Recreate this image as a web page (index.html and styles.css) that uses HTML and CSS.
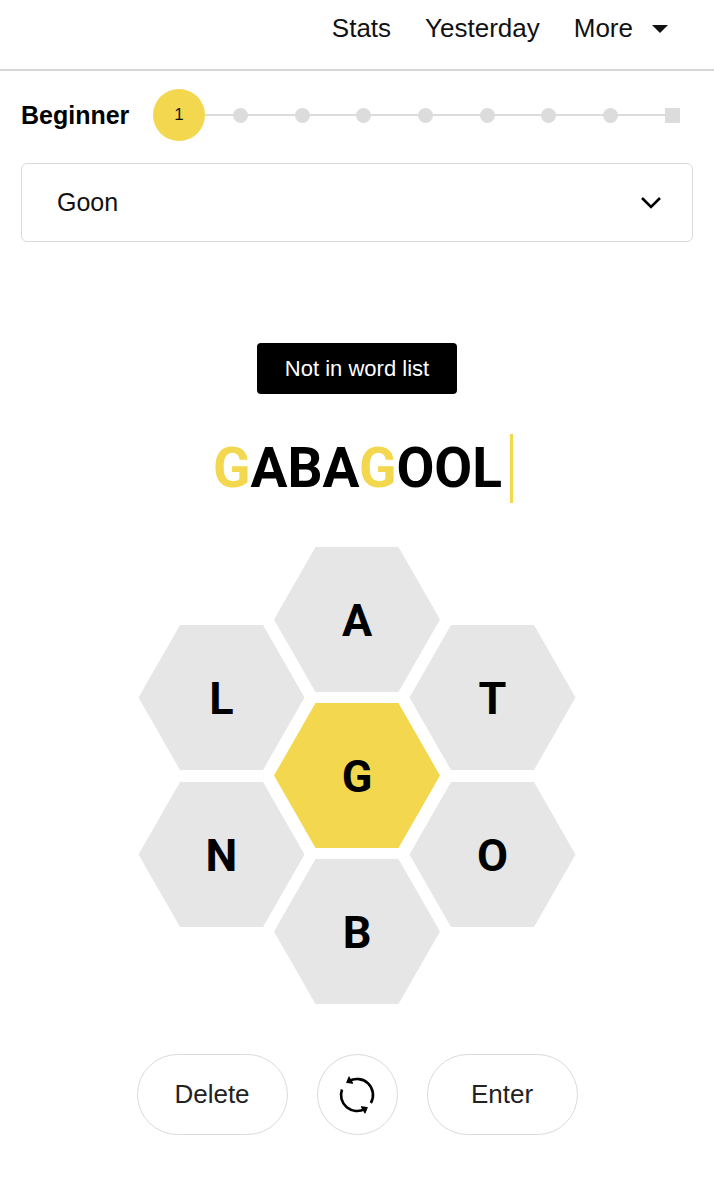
FILE: index.html
```html
<!DOCTYPE html>
<html lang="en">
<head>
<meta charset="utf-8">
<title>Spelling Bee</title>
<link rel="stylesheet" href="styles.css">
</head>
<body>
<header class="topnav">
  <a class="nav-link">Stats</a>
  <a class="nav-link">Yesterday</a>
  <a class="nav-link nav-more">More <span class="caret"></span></a>
</header>

<section class="rank">
  <span class="rank-label">Beginner</span>
  <div class="rank-track">
    <div class="step"><span class="step-current">1</span></div>
    <div class="step"><span class="step-dot"></span></div>
    <div class="step"><span class="step-dot"></span></div>
    <div class="step"><span class="step-dot"></span></div>
    <div class="step"><span class="step-dot"></span></div>
    <div class="step"><span class="step-dot"></span></div>
    <div class="step"><span class="step-dot"></span></div>
    <div class="step"><span class="step-dot"></span></div>
    <div class="step"><span class="step-last"></span></div>
  </div>
</section>

<div class="wordlist-toggle">
  <span class="wordlist-text">Goon</span>
  <svg class="chevron" width="22" height="14" viewBox="0 0 22 14"><polyline points="2,2 11,11 20,2" fill="none" stroke="#000" stroke-width="2.6"/></svg>
</div>

<main class="play">
  <div class="toast">Not in word list</div>

  <div class="input-row">
    <span class="input-word"><span class="center-letter">G</span>ABA<span class="center-letter">G</span>OOL</span>
    <span class="cursor"></span>
  </div>

  <svg class="hive" width="440" height="458" viewBox="0 0 440 458">
    <g class="cell">
      <polygon class="cell-outer" points="137,72.5 178.5,0 261.5,0 303,72.5 261.5,145 178.5,145"/>
      <text class="cell-letter" x="220" y="89">A</text>
    </g>
    <g class="cell">
      <polygon class="cell-outer" points="1.5,150.5 43,78 126,78 167.5,150.5 126,223 43,223"/>
      <text class="cell-letter" x="84.5" y="167">L</text>
    </g>
    <g class="cell">
      <polygon class="cell-outer" points="272.5,150.5 314,78 397,78 438.5,150.5 397,223 314,223"/>
      <text class="cell-letter" x="355.5" y="167">T</text>
    </g>
    <g class="cell">
      <polygon class="cell-center" points="137,228.5 178.5,156 261.5,156 303,228.5 261.5,301 178.5,301"/>
      <text class="cell-letter" x="220" y="245">G</text>
    </g>
    <g class="cell">
      <polygon class="cell-outer" points="1.5,307.5 43,235 126,235 167.5,307.5 126,380 43,380"/>
      <text class="cell-letter" x="84.5" y="324">N</text>
    </g>
    <g class="cell">
      <polygon class="cell-outer" points="272.5,307.5 314,235 397,235 438.5,307.5 397,380 314,380"/>
      <text class="cell-letter" x="355.5" y="324">O</text>
    </g>
    <g class="cell">
      <polygon class="cell-outer" points="137,384.5 178.5,312 261.5,312 303,384.5 261.5,457 178.5,457"/>
      <text class="cell-letter" x="220" y="401">B</text>
    </g>
  </svg>

  <div class="controls">
    <button class="pill">Delete</button>
    <button class="pill pill-round" aria-label="Shuffle">
      <svg width="40" height="40" viewBox="0 0 40 40" stroke="#000" stroke-width="2.6" stroke-linejoin="round">
        <path d="M12 6.14 A16 16 0 0 1 33.86 28" fill="none"/>
        <path d="M28 33.86 A16 16 0 0 1 4.97 14.53" fill="none"/>
        <polygon points="9.84,7.39 15.48,8.17 11.98,2.11" fill="#000" stroke-width="1.2"/>
        <polygon points="30.17,32.61 28.02,37.89 24.52,31.83" fill="#000" stroke-width="1.2"/>
      </svg>
    </button>
    <button class="pill">Enter</button>
  </div>
</main>
</body>
</html>
```

FILE: styles.css
```css
* {
  box-sizing: border-box;
}

body {
  margin: 0;
  background: #fff;
  color: #000;
  font-family: "Liberation Sans", Arial, sans-serif;
}

/* top navigation */
.topnav {
  display: flex;
  justify-content: flex-end;
  align-items: flex-start;
  gap: 34px;
  height: 71px;
  padding: 13px 46px 0 0;
  border-bottom: 2px solid #d6d6d6;
}

.nav-link {
  font-size: 26px;
  line-height: 30px;
  color: #121212;
}

.nav-more {
  display: flex;
  align-items: center;
  gap: 19px;
}

.caret {
  width: 0;
  height: 0;
  border-left: 8px solid transparent;
  border-right: 8px solid transparent;
  border-top: 8px solid #121212;
  margin-top: 2px;
}

/* rank progress */
.rank {
  display: flex;
  align-items: center;
  height: 52px;
  margin-top: 18px;
  padding-left: 21px;
  padding-right: 42px;
}

.rank-label {
  font-weight: 700;
  font-size: 25px;
  width: 158px;
  flex: none;
}

.rank-track {
  flex: 1;
  height: 52px;
  display: flex;
  justify-content: space-between;
  align-items: center;
  background: linear-gradient(#dcdcdc, #dcdcdc) center / 100% 2px no-repeat;
}

.step {
  width: 0;
  display: flex;
  justify-content: center;
  align-items: center;
}

.step-current {
  flex: none;
  width: 52px;
  height: 52px;
  border-radius: 50%;
  background: #f3d84f;
  display: flex;
  align-items: center;
  justify-content: center;
  font-size: 17px;
  color: #111;
}

.step-dot {
  flex: none;
  width: 15px;
  height: 15px;
  border-radius: 50%;
  background: #dcdcdc;
}

.step-last {
  flex: none;
  width: 15px;
  height: 15px;
  background: #dcdcdc;
}

/* found words toggle */
.wordlist-toggle {
  margin: 22px 21px 0;
  height: 79px;
  border: 1px solid #dadada;
  border-radius: 6px;
  display: flex;
  align-items: center;
  justify-content: space-between;
  padding: 0 30px 0 35px;
}

.wordlist-text {
  font-size: 25px;
  color: #111;
}

.chevron {
  display: block;
}

/* play area */
.play {
  display: flex;
  flex-direction: column;
  align-items: center;
}

.toast {
  margin-top: 101px;
  width: 200px;
  height: 51px;
  background: #000;
  color: #fff;
  border-radius: 4px;
  font-size: 22px;
  display: flex;
  align-items: center;
  justify-content: center;
}

.input-row {
  margin-top: 39px;
  height: 70px;
  display: flex;
  align-items: center;
  padding-left: 12px;
}

.input-word {
  font-family: Roboto, "Liberation Sans", sans-serif;
  font-weight: 700;
  font-size: 55px;
  line-height: 70px;
  color: #000;
}

.center-letter {
  color: #f3d84f;
}

.cursor {
  width: 3px;
  height: 69px;
  margin-left: 8px;
  background: #f3d84f;
}

.hive {
  display: block;
  margin-top: 44px;
}

.cell-outer {
  fill: #e6e6e6;
}

.cell-center {
  fill: #f3d84f;
}

.cell-letter {
  font-family: Roboto, "Liberation Sans", sans-serif;
  font-weight: 700;
  font-size: 45px;
  text-anchor: middle;
  fill: #000;
}

/* action buttons */
.controls {
  margin-top: 49px;
  display: flex;
  gap: 29px;
}

.pill {
  width: 151px;
  height: 81px;
  border: 1px solid #dadada;
  border-radius: 41px;
  background: #fff;
  font-family: "Liberation Sans", Arial, sans-serif;
  font-size: 26px;
  color: #222;
  display: flex;
  align-items: center;
  justify-content: center;
  padding: 0;
}

.pill-round {
  width: 81px;
}
```
